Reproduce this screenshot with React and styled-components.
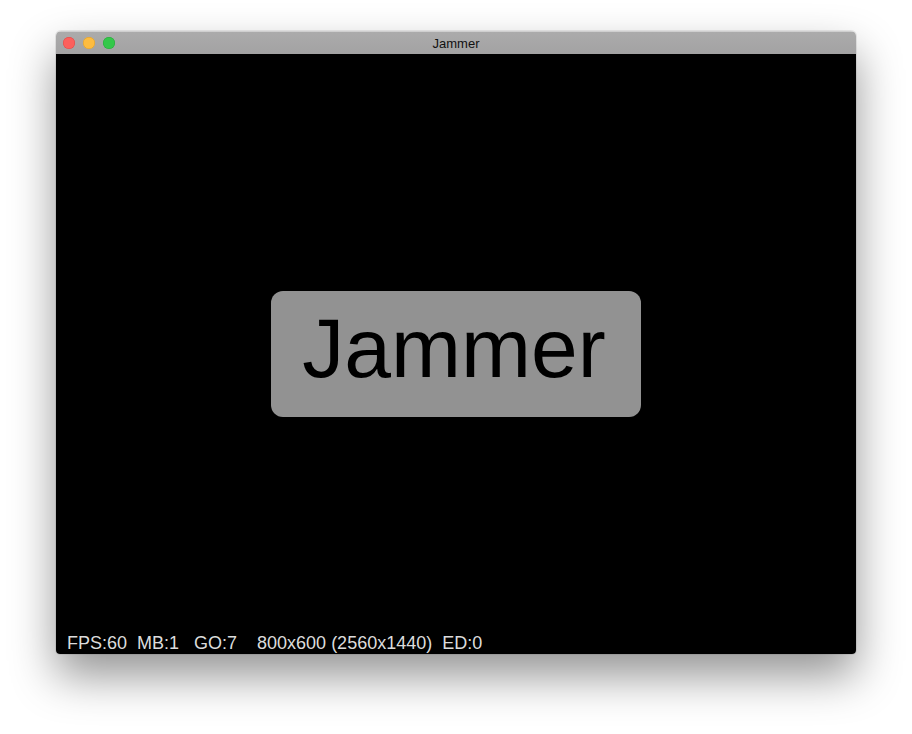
import React from "react";
import styled, { createGlobalStyle } from "styled-components";

const GlobalStyle = createGlobalStyle`
  html, body {
    margin: 0;
    background: #ffffff;
  }
  body {
    font-family: "Liberation Sans", Arial, sans-serif;
  }
`;

const Page = styled.div`
  width: 912px;
  height: 734px;
  padding: 31px 0 0 56px;
  box-sizing: border-box;
  overflow: hidden;
`;

const Window = styled.div`
  width: 800px;
  border-radius: 5px 5px 4px 4px;
  overflow: hidden;
  box-shadow: 0 22px 45px rgba(0, 0, 0, 0.42), 0 0 0 1px rgba(0, 0, 0, 0.08);
`;

const TitleBar = styled.div`
  height: 23px;
  background: linear-gradient(#ababab, #a3a2a3);
  border-top: 1px solid #cfcfcf;
  box-sizing: border-box;
  display: grid;
  grid-template-columns: 1fr auto 1fr;
  align-items: center;
  padding: 0 7px;
`;

const Lights = styled.div`
  display: flex;
  gap: 8px;
`;

const Light = styled.span`
  width: 12px;
  height: 12px;
  border-radius: 50%;
  background: ${(p) => p.color};
  box-shadow: inset 0 0 0 0.5px ${(p) => p.edge};
`;

const Title = styled.div`
  font-size: 13px;
  color: #111;
`;

const Canvas = styled.div`
  height: 600px;
  background: #000;
  display: grid;
  place-items: center;
`;

const Stack = styled.div`
  grid-area: 1 / 1;
  align-self: ${(p) => p.align || "center"};
  justify-self: ${(p) => p.justify || "center"};
`;

const JamButton = styled.div`
  width: 370px;
  height: 126px;
  border-radius: 12px;
  background: #929292;
  display: flex;
  align-items: center;
  justify-content: center;
  font-size: 84px;
  color: #000;
  box-sizing: border-box;
  padding: 0 4px 12px 0;
`;

const Hud = styled.div`
  white-space: pre;
  color: #dcdcdc;
  font-size: 18px;
  padding: 0 0 1px 11px;
  line-height: 20px;
`;

export default function App() {
  return (
    <>
      <GlobalStyle />
      <Page>
        <Window>
          <TitleBar>
            <Lights>
              <Light color="#fc605c" edge="#de4a46" />
              <Light color="#fdbc40" edge="#de9f2c" />
              <Light color="#34c84a" edge="#27a83a" />
            </Lights>
            <Title>Jammer</Title>
            <span />
          </TitleBar>
          <Canvas>
            <Stack>
              <JamButton>Jammer</JamButton>
            </Stack>
            <Stack align="end" justify="start">
              <Hud>{"FPS:60  MB:1   GO:7    800x600 (2560x1440)  ED:0"}</Hud>
            </Stack>
          </Canvas>
        </Window>
      </Page>
    </>
  );
}
